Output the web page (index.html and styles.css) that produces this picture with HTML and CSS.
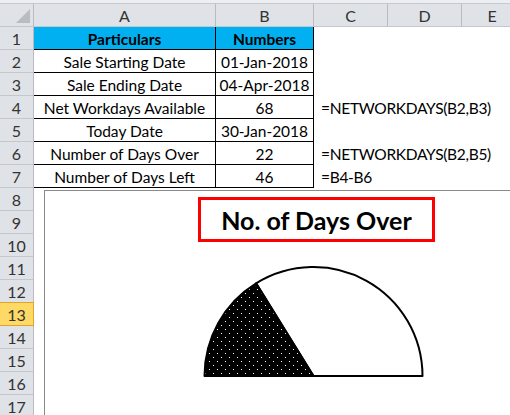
FILE: index.html
```html
<!DOCTYPE html>
<html>
<head>
<meta charset="utf-8">
<link rel="stylesheet" href="styles.css">
</head>
<body>
<div class="app">
  <div class="topband"></div>
  <div class="sheet">
    <div class="hd corner"><span class="tri"></span></div>
    <div class="hd col">A</div>
    <div class="hd col">B</div>
    <div class="hd col">C</div>
    <div class="hd col">D</div>
    <div class="hd col last">E</div>

    <div class="hd rn">1</div>
    <div class="c t head">Particulars</div>
    <div class="c t head">Numbers</div>
    <div class="c"></div><div class="c"></div><div class="c"></div>

    <div class="hd rn">2</div>
    <div class="c t">Sale Starting Date</div>
    <div class="c t">01-Jan-2018</div>
    <div class="c"></div><div class="c"></div><div class="c"></div>

    <div class="hd rn">3</div>
    <div class="c t">Sale Ending Date</div>
    <div class="c t">04-Apr-2018</div>
    <div class="c"></div><div class="c"></div><div class="c"></div>

    <div class="hd rn">4</div>
    <div class="c t">Net Workdays Available</div>
    <div class="c t">68</div>
    <div class="c f">=NETWORKDAYS(B2,B3)</div><div class="c"></div><div class="c"></div>

    <div class="hd rn">5</div>
    <div class="c t">Today Date</div>
    <div class="c t">30-Jan-2018</div>
    <div class="c"></div><div class="c"></div><div class="c"></div>

    <div class="hd rn">6</div>
    <div class="c t">Number of Days Over</div>
    <div class="c t">22</div>
    <div class="c f">=NETWORKDAYS(B2,B5)</div><div class="c"></div><div class="c"></div>

    <div class="hd rn">7</div>
    <div class="c t">Number of Days Left</div>
    <div class="c t">46</div>
    <div class="c f">=B4-B6</div><div class="c"></div><div class="c"></div>

    <div class="hd rn">8</div><div class="c"></div><div class="c"></div><div class="c"></div><div class="c"></div><div class="c"></div>
    <div class="hd rn">9</div><div class="c"></div><div class="c"></div><div class="c"></div><div class="c"></div><div class="c"></div>
    <div class="hd rn">10</div><div class="c"></div><div class="c"></div><div class="c"></div><div class="c"></div><div class="c"></div>
    <div class="hd rn">11</div><div class="c"></div><div class="c"></div><div class="c"></div><div class="c"></div><div class="c"></div>
    <div class="hd rn">12</div><div class="c"></div><div class="c"></div><div class="c"></div><div class="c"></div><div class="c"></div>
    <div class="hd rn sel">13</div><div class="c"></div><div class="c"></div><div class="c"></div><div class="c"></div><div class="c"></div>
    <div class="hd rn">14</div><div class="c"></div><div class="c"></div><div class="c"></div><div class="c"></div><div class="c"></div>
    <div class="hd rn">15</div><div class="c"></div><div class="c"></div><div class="c"></div><div class="c"></div><div class="c"></div>
    <div class="hd rn">16</div><div class="c"></div><div class="c"></div><div class="c"></div><div class="c"></div><div class="c"></div>
    <div class="hd rn">17</div><div class="c"></div><div class="c"></div><div class="c"></div><div class="c"></div><div class="c"></div>
  </div>

  <div class="chart">
    <div class="title">No. of Days Over</div>
    <svg class="pie" width="470" height="230" viewBox="45 191 470 230">
      <defs>
        <pattern id="dots" width="8" height="8" patternUnits="userSpaceOnUse">
          <rect width="8" height="8" fill="#000"/>
          <rect x="1" y="1" width="1" height="1" fill="#fff"/>
          <rect x="5" y="5" width="1" height="1" fill="#fff"/>
        </pattern>
      </defs>
      <path d="M313.5 376 L256.1 283.4 A109 109 0 0 1 422.5 376 Z" fill="#fff" stroke="#000" stroke-width="2" stroke-linejoin="round"/>
      <path d="M313.5 376 L204.5 376 A109 109 0 0 1 256.1 283.4 Z" fill="url(#dots)" stroke="#000" stroke-width="2" stroke-linejoin="round"/>
    </svg>
  </div>
</div>
</body>
</html>
```

FILE: styles.css
```css
html, body {
  margin: 0;
  padding: 0;
  background: #fff;
}
.app {
  position: relative;
  width: 510px;
  height: 415px;
  overflow: hidden;
  font-family: Lato, "Open Sans", sans-serif;
}
.topband {
  height: 3px;
  background: #eceef1;
  border-bottom: 1px solid #c6cacf;
}
.sheet {
  display: grid;
  grid-template-columns: 34px 182px 98px 74px 74px 60px;
  grid-template-rows: 23px;
  grid-auto-rows: 23px;
}
.hd {
  box-sizing: border-box;
  background: #dfe2e6;
  border-right: 1px solid #b8bcc2;
  border-bottom: 1px solid #c4c8cd;
  color: #333;
  font-size: 16px;
  display: flex;
  align-items: center;
  justify-content: center;
  padding-top: 1px;
}
.hd.last {
  border-right: none;
}
.corner {
  position: relative;
}
.tri {
  position: absolute;
  right: 3px;
  bottom: 3px;
  width: 0;
  height: 0;
  border-left: 14px solid transparent;
  border-bottom: 14px solid #b9bdc2;
}
.hd.sel {
  background: #ffd966;
  border: 1px solid #e2a428;
  border-left: none;
  margin-top: -1px;
  height: 24px;
}
.c {
  box-sizing: border-box;
  font-size: 15.5px;
  color: #000;
  display: flex;
  align-items: center;
  justify-content: center;
  white-space: nowrap;
  padding-top: 1px;
}
.c.t {
  border-right: 1px solid #000;
  border-bottom: 1px solid #000;
}
.c.head {
  background: #00b0f0;
  font-weight: bold;
}
.c.f {
  justify-content: flex-start;
  padding-left: 7px;
  letter-spacing: -0.3px;
  overflow: visible;
}
.chart {
  position: absolute;
  left: 44px;
  top: 190px;
  width: 520px;
  height: 260px;
  background: #fff;
  border: 1px solid #8a8a8a;
}
.title {
  position: absolute;
  left: 153px;
  top: 6px;
  width: 237px;
  height: 45px;
  box-sizing: border-box;
  border: 3px solid #ff0000;
  display: flex;
  align-items: center;
  justify-content: center;
  font-weight: bold;
  font-size: 25px;
  color: #000;
}
.pie {
  position: absolute;
  left: 0;
  top: 0;
}
```
